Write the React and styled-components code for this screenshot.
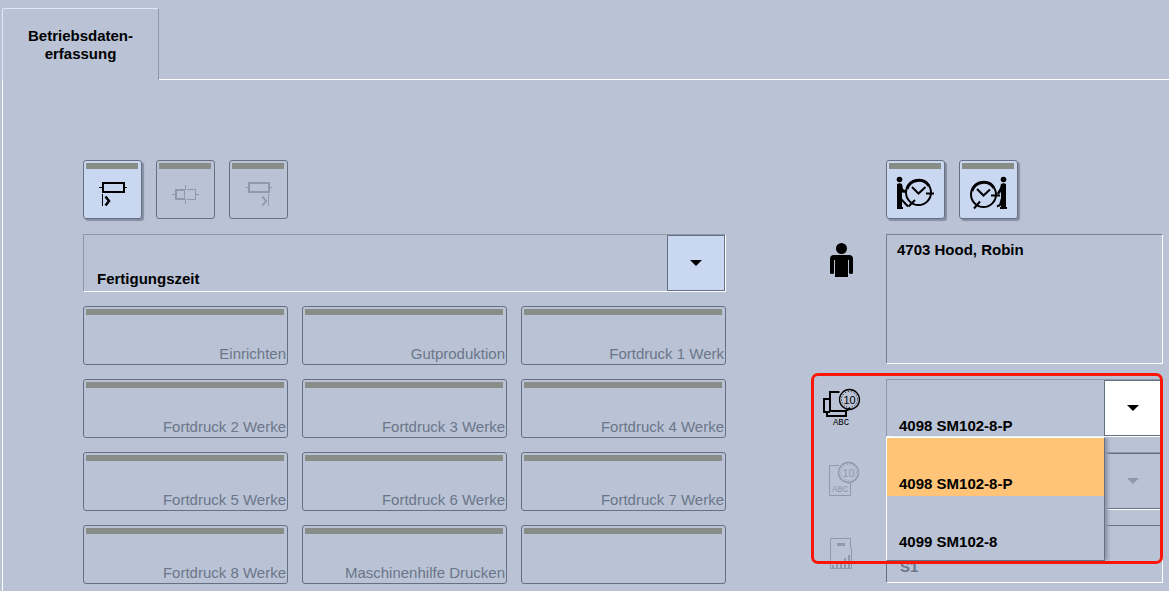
import React, { useState } from "react";
import styled, { createGlobalStyle } from "styled-components";

const GlobalStyle = createGlobalStyle`
  * {
    box-sizing: border-box;
  }
  body {
    margin: 0;
    background-color: #b9c3d5;
    font-family: "Liberation Sans", Arial, sans-serif;
    font-size: 15px;
    line-height: 18px;
    color: black;
  }
  button, select, input, textarea {
    font: inherit;
    color: inherit;
    margin: 0;
    border-radius: 0;
  }
`;

const Page = styled.div`
  display: flex;
  flex-direction: column;
  min-height: 100vh;
  padding: 8px 0 0 2px;
`;

const TabBar = styled.div`
  display: flex;
`;

const Tab = styled.button`
  width: 157px;
  padding: 18px 10px 17px;
  background: transparent;
  border: 1px solid #dfe8f6;
  border-right-color: #8f98a8;
  border-bottom: none;
  border-radius: 2px 2px 0 0;
  font-weight: 700;
  text-align: center;
`;

const TabLine = styled.div`
  flex: 1;
  border-bottom: 1px solid white;
`;

const Content = styled.main`
  flex: 1;
  display: grid;
  grid-template-columns: minmax(0, 643fr) minmax(0, 351fr);
  column-gap: 86px;
  align-items: start;
  padding: 80px 6px 7px 80px;
  border-left: 1px solid white;
`;

const Column = styled.section`
  display: flex;
  flex-direction: column;
  gap: 14px;
`;

const Toolbar = styled.div`
  display: flex;
  gap: 14px;
  padding-bottom: 1px;
  padding-left: ${props => (props.$indent ? "74px" : "0")};
`;

const BarButton = styled.button`
  display: flex;
  flex-direction: column;
  height: 59px;
  padding: 2px 3px 0 2px;
  border: 1px solid #667083;
  border-radius: 3px;
  background: transparent;
  color: #6c7689;
  overflow: hidden;

  &::before {
    content: "";
    flex: none;
    width: 100%;
    height: 6px;
    background-color: #888d88;
  }
`;

const ToolButton = styled(BarButton)`
  gap: 1px;
  width: 59px;
  background-color: ${props => (props.disabled ? "transparent" : "#c9d7f1")};
  color: ${props => (props.disabled ? "#8e99ac" : "black")};
  box-shadow: ${props => (props.disabled ? "none" : "2px 2px 1px #8590a5")};
`;

const Glyph = styled.svg`
  display: block;
  flex: none;
  fill: none;
  stroke: currentColor;
`;

const GlyphText = styled.text`
  font-family: "Liberation Mono", monospace;
  font-size: 9px;
  fill: currentColor;
  stroke: none;
  text-anchor: middle;
`;

const BadgeText = styled(GlyphText)`
  font-family: "Liberation Sans", sans-serif;
  font-size: 11px;
`;

const Grid = styled.div`
  display: grid;
  grid-template-columns: repeat(3, minmax(0, 1fr));
  gap: 14px;
`;

const OperationButton = styled(BarButton)`
  justify-content: space-between;
`;

const OperationLabel = styled.span`
  align-self: flex-end;
  margin-right: -2px;
  padding-bottom: 1px;
  white-space: nowrap;
`;

const Combo = styled.div`
  flex: 1;
  display: grid;
  grid-template-columns: minmax(0, 1fr);
  position: relative;
  height: 58px;
  border: 1px solid #8e98a9;
  border-right-color: white;
  border-bottom-color: white;
`;

const comboText = `
  grid-area: 1 / 1;
  appearance: none;
  width: 100%;
  border: none;
  background: transparent;
  padding: 35px 70px 3px 13px;
  font-weight: 700;
  text-align: left;
`;

const ComboSelect = styled.select`
  ${comboText}
`;

const ComboButton = styled.button`
  ${comboText}
  padding: 37px 70px 1px 12px;
`;

const Arrow = styled.span`
  grid-area: 1 / 1;
  justify-self: end;
  display: flex;
  align-items: center;
  justify-content: center;
  width: 58px;
  border: 1px solid #667083;
  background-color: ${props => props.$color || "transparent"};
  color: ${props => (props.$muted ? "#8e99ac" : "black")};
  pointer-events: none;
`;

const Row = styled.div`
  display: grid;
  grid-template-columns: 74px minmax(0, 1fr);
  align-items: start;
`;

const RowIcon = styled.div`
  padding: ${props => props.$top || "9px"} 0 0 10px;
  color: ${props => (props.$muted ? "#8e99ac" : "black")};
`;

const PersonBox = styled.textarea`
  display: block;
  height: 130px;
  padding: 6px 10px;
  border: 1px solid #77808f;
  border-right-color: white;
  border-bottom-color: white;
  background: transparent;
  font-weight: 700;
  resize: none;
  outline: none;
`;

const Machines = styled.div`
  position: relative;
  display: flex;
  flex-direction: column;
  gap: 15px;
  margin-top: 1px;
`;

const StationInput = styled.input`
  width: 100%;
  height: 58px;
  padding: 31px 13px 7px;
  border: 1px solid #667083;
  border-right-color: white;
  border-bottom-color: white;
  background: transparent;
  color: #6c7689;
  font-weight: 700;
`;

const OptionList = styled.ul`
  position: absolute;
  top: 57px;
  left: -1px;
  right: 57px;
  z-index: 1;
  margin: 0;
  padding: 0 0 6px;
  list-style: none;
  background-color: #b9c3d5;
  border: 1px solid white;
  border-right-color: #667083;
  border-bottom-color: #667083;
  box-shadow: 4px 0 3px -1px #8f9aae;
`;

const Option = styled.li`
  display: flex;
  align-items: flex-end;
  height: 58px;
  padding: 0 12px 3px;
  background-color: ${props => (props.$active ? "#ffc477" : "transparent")};
  font-weight: 700;
`;

const Highlight = styled.div`
  position: absolute;
  top: -6px;
  left: -1px;
  right: 0;
  height: 191px;
  z-index: 2;
  border: 3px solid #fb1607;
  border-radius: 7px;
  pointer-events: none;
`;

const Triangle = () => (
  <Glyph width="12" height="6" viewBox="0 0 12 6">
    <path d="M0 0H12L6 6Z" fill="currentColor" stroke="none" />
  </Glyph>
);

const StartIcon = () => (
  <Glyph width="52" height="46" viewBox="0 0 52 46">
    <rect x="17" y="13" width="21" height="9" strokeWidth="2" />
    <path d="M13 17.5H16M39 17.5H41M16.5 24V36" />
    <path d="M19.5 26.5L23 31L19.5 35.5" strokeWidth="2.5" />
  </Glyph>
);

const SplitIcon = () => (
  <Glyph width="52" height="46" viewBox="0 0 52 46">
    <path d="M26 20H17V29H26" strokeWidth="2" />
    <path d="M28 19.5H36.5V29.5H28M13 24.5H16M37 24.5H40M26.5 15V20M25.5 20V29M26.5 29V34" />
  </Glyph>
);

const EndIcon = () => (
  <Glyph width="52" height="46" viewBox="0 0 52 46">
    <rect x="17" y="13" width="20" height="9" strokeWidth="2" />
    <path d="M14 17.5H16M38 17.5H40M36.5 24V36" />
    <path d="M30.5 26.5L34 31L30.5 35.5" strokeWidth="2" />
  </Glyph>
);

const ClockInIcon = () => (
  <Glyph width="52" height="46" viewBox="0 0 52 46">
    <circle cx="29.5" cy="22.5" r="12.5" strokeWidth="2" />
    <path d="M18 19A12.2 12.2 0 0 1 40 16" strokeWidth="3" />
    <path d="M23 17L29.5 23.5L36.5 17M37 23.5H45M26 30L19.5 36.5" strokeWidth="2" />
    <circle cx="10.5" cy="9.5" r="2.8" fill="currentColor" stroke="none" />
    <path d="M8 14Q10.5 12.5 13 14L14 19L18 21V23L13 22.5V38.5H8Z" fill="currentColor" stroke="none" />
    <path d="M12 29L19 36.5M8 38H14" strokeWidth="2" />
  </Glyph>
);

const ClockOutIcon = () => (
  <Glyph width="52" height="46" viewBox="0 0 52 46">
    <circle cx="21.5" cy="24.5" r="12.5" strokeWidth="2" />
    <path d="M10 21A12.2 12.2 0 0 1 32 18" strokeWidth="3" />
    <path d="M15 19L21.5 25.5L28 19.5M29 25.5H38M18 31.5L12 38.5" strokeWidth="2" />
    <circle cx="41.5" cy="9.5" r="2.8" fill="currentColor" stroke="none" />
    <path d="M39 14Q41.5 12.5 44 14V38.5H39V22L36 25L35 23L38 18Z" fill="currentColor" stroke="none" />
    <path d="M40 28L38 35L35 36.5M38 38H45" strokeWidth="2" />
  </Glyph>
);

const PersonIcon = () => (
  <Glyph width="40" height="36" viewBox="0 0 40 36">
    <g fill="currentColor" stroke="none">
      <circle cx="19.5" cy="5.5" r="5.5" />
      <path d="M12 12H27Q31 12 31 16V30Q31 31 29 31Q27 31 27 30V17H26V34H13V17H12V30Q12 31 10 31Q8 31 8 30V16Q8 12 12 12Z" />
    </g>
  </Glyph>
);

const Badge = ({ x, y }) => (
  <g>
    <circle cx={x} cy={y} r="10" strokeWidth="1.3" />
    <circle cx={x} cy={y} r="8" strokeDasharray="1 2" />
    <BadgeText x={x} y={y + 4}>10</BadgeText>
  </g>
);

const MachineIcon = () => (
  <Glyph width="44" height="42" viewBox="0 0 44 42">
    <path d="M17.5 4H8V23H24L28 20M8 11H2V24H8M5 24V28H24V24" strokeWidth="2" />
    <Badge x={27.5} y={11.5} />
    <GlyphText x="19" y="37">ABC</GlyphText>
  </Glyph>
);

const OrderIcon = () => (
  <Glyph width="44" height="42" viewBox="0 0 44 42">
    <path d="M17 4.5H7.5V34.5H28.5V22" />
    <Badge x={26.5} y={11.5} />
    <GlyphText x="18" y="31">ABC</GlyphText>
  </Glyph>
);

const StationIcon = () => (
  <Glyph width="44" height="36" viewBox="0 0 44 36">
    <path d="M8.5 1.5H28.5V10L29.5 11V31.5H8.5Z" />
    <path d="M15 7.5H23" strokeWidth="3" />
    <path d="M11 31V28M15 31V26M19 31V24M23 31V21M27 31V18" strokeWidth="2" />
  </Glyph>
);

const operations = [
  "Einrichten",
  "Gutproduktion",
  "Fortdruck 1 Werk",
  "Fortdruck 2 Werke",
  "Fortdruck 3 Werke",
  "Fortdruck 4 Werke",
  "Fortdruck 5 Werke",
  "Fortdruck 6 Werke",
  "Fortdruck 7 Werke",
  "Fortdruck 8 Werke",
  "Maschinenhilfe Drucken",
  ""
];

const machines = ["4098 SM102-8-P", "4099 SM102-8"];

const MachineSelect = () => {
  const [open, setOpen] = useState(true);
  const [selected, setSelected] = useState(machines[0]);

  const choose = machine => {
    setSelected(machine);
    setOpen(false);
  };

  return (
    <Combo>
      <ComboButton
        aria-haspopup="listbox"
        aria-expanded={open}
        onClick={() => setOpen(!open)}
      >
        {selected}
      </ComboButton>
      <Arrow $color="white">
        <Triangle />
      </Arrow>
      {open && (
        <OptionList role="listbox" aria-label="Maschine">
          {machines.map(machine => (
            <Option
              key={machine}
              role="option"
              aria-selected={machine === selected}
              $active={machine === selected}
              onClick={() => choose(machine)}
            >
              {machine}
            </Option>
          ))}
        </OptionList>
      )}
    </Combo>
  );
};

const App = () => (
  <>
    <GlobalStyle />
    <Page>
      <TabBar role="tablist">
        <Tab role="tab" aria-selected="true">
          Betriebsdaten-
          <br />
          erfassung
        </Tab>
        <TabLine />
      </TabBar>
      <Content>
        <Column>
          <Toolbar>
            <ToolButton aria-label="Start">
              <StartIcon />
            </ToolButton>
            <ToolButton aria-label="Unterbrechen" disabled>
              <SplitIcon />
            </ToolButton>
            <ToolButton aria-label="Ende" disabled>
              <EndIcon />
            </ToolButton>
          </Toolbar>
          <Combo>
            <ComboSelect aria-label="Zeitart">
              <option>Fertigungszeit</option>
            </ComboSelect>
            <Arrow $color="#c9d7f1">
              <Triangle />
            </Arrow>
          </Combo>
          <Grid>
            {operations.map((name, index) => (
              <OperationButton key={index} disabled>
                <OperationLabel>{name}</OperationLabel>
              </OperationButton>
            ))}
          </Grid>
        </Column>
        <Column>
          <Toolbar $indent>
            <ToolButton aria-label="Anmelden">
              <ClockInIcon />
            </ToolButton>
            <ToolButton aria-label="Abmelden">
              <ClockOutIcon />
            </ToolButton>
          </Toolbar>
          <Row>
            <RowIcon>
              <PersonIcon />
            </RowIcon>
            <PersonBox aria-label="Personal" readOnly defaultValue="4703 Hood, Robin" />
          </Row>
          <Machines>
            <Row>
              <RowIcon>
                <MachineIcon />
              </RowIcon>
              <MachineSelect />
            </Row>
            <Row>
              <RowIcon $muted>
                <OrderIcon />
              </RowIcon>
              <Combo>
                <ComboSelect aria-label="Auftrag" disabled />
                <Arrow $muted>
                  <Triangle />
                </Arrow>
              </Combo>
            </Row>
            <Row>
              <RowIcon $muted $top="12px">
                <StationIcon />
              </RowIcon>
              <StationInput aria-label="Station" disabled defaultValue="S1" />
            </Row>
            <Highlight />
          </Machines>
        </Column>
      </Content>
    </Page>
  </>
);

export default App;
